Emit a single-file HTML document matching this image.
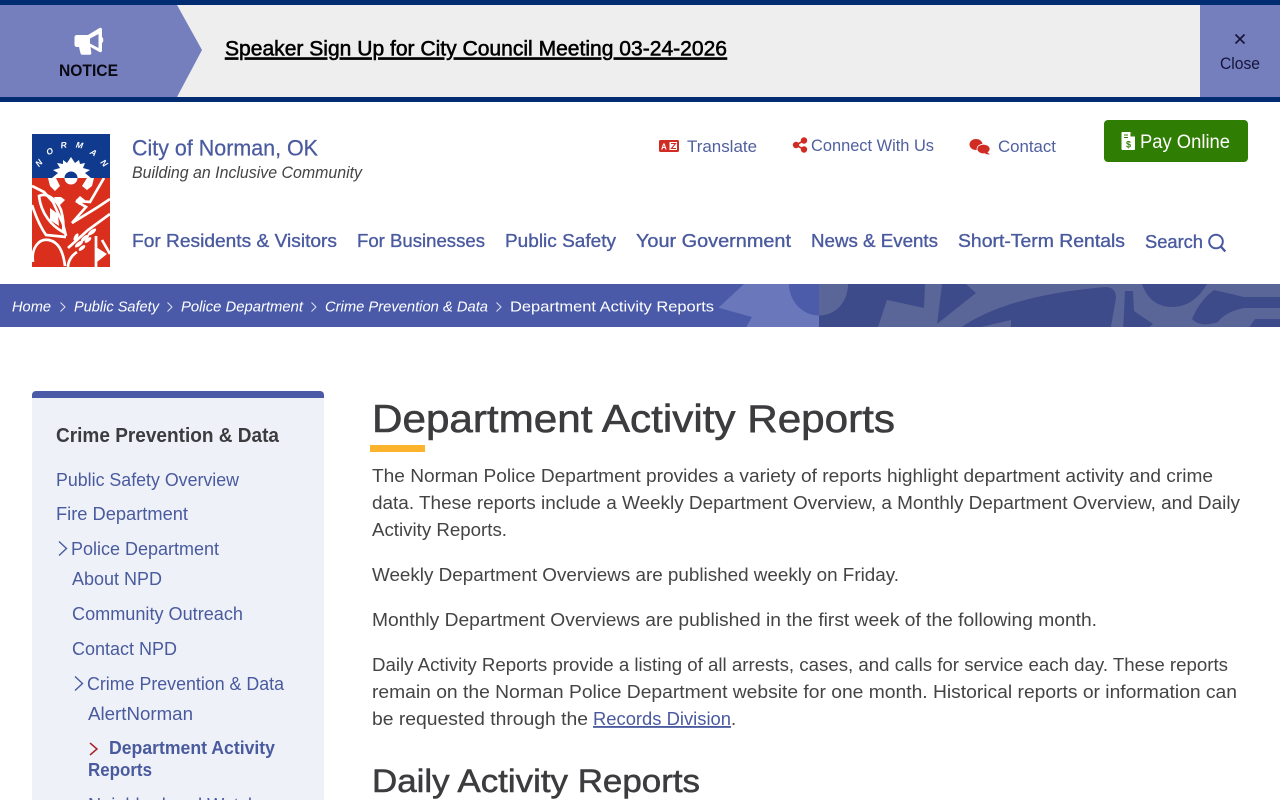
<!DOCTYPE html>
<html lang="en">
<head>
<meta charset="utf-8">
<title>Department Activity Reports</title>
<style>
html,body{margin:0;padding:0;background:#fff}
body{width:1280px;height:800px;overflow:hidden;position:relative}
.b{position:absolute}
svg{position:absolute;left:0;top:0;display:block}
text{font-family:"Liberation Sans",Arial,sans-serif;white-space:pre}
.n{font-size:18.5px;fill:#4a5a9e;stroke:#4a5a9e;stroke-width:.35px}
.p{font-size:18.4px;fill:#444}
.s{font-size:18.4px;fill:#4a5a9e}
.c{font-size:15.2px;fill:#fff;font-style:italic}
.t{font-size:16.4px;fill:#4f5f9f}
</style>
</head>
<body>
<div class="b" style="left:0;top:0;width:1280px;height:102px;background:#002d72"></div>
<div class="b" style="left:0;top:5px;width:1280px;height:92px;background:#eee"></div>
<div class="b" style="left:1200px;top:5px;width:80px;height:92px;background:#767fbd"></div>
<div class="b" style="left:1104px;top:120px;width:144px;height:42px;background:#2f7d02;border-radius:4px"></div>
<div class="b" style="left:0;top:284px;width:1280px;height:43px;background:#4a5aa8"></div>
<div class="b" style="left:32px;top:391px;width:292px;height:409px;background:#eef2f8;border-radius:4px 4px 0 0"></div>
<div class="b" style="left:32px;top:391px;width:292px;height:7px;background:#4c59a6;border-radius:4px 4px 0 0"></div>
<div class="b" style="left:370px;top:445px;width:55px;height:7px;background:#fdb42c"></div>

<svg width="1280" height="800" viewBox="0 0 1280 800" xmlns="http://www.w3.org/2000/svg">
<defs><clipPath id="bar"><rect x="0" y="284" width="1280" height="43"/></clipPath>
<clipPath id="lt"><rect x="32" y="134" width="78" height="44"/></clipPath>
<clipPath id="lb"><rect x="32" y="178" width="78" height="89"/></clipPath></defs>

<!-- notice -->
<polygon points="0,5 177,5 202,50 177,97 0,97" fill="#767fbd"/>
<path d="M77 35h11l11.500-7c1.300-.7 2.500.1 2.500 1.500V37c.8.5 1.300 1.500 1.300 3s-.5 2.500-1.300 3v7.500c0 1.400-1.200 2.200-2.500 1.500l-9-5 .8 6c.2 1-.5 1.800-1.500 1.800h-7.500c-1 0-1.600-.6-1.800-1.500L79 47h-2c-1.500 0-2.500-1-2.500-2.500v-7c0-1.500 1-2.500 2.500-2.500z M90 38.500v5l8.500 4.500V34z" fill="#fff" fill-rule="evenodd"/>
<text x="59" y="76" font-size="16.500" font-weight="700" fill="#0a0a14" textLength="59" lengthAdjust="spacingAndGlyphs">NOTICE</text>
<a href="#"><text x="225" y="55.500" font-size="21" fill="#000" stroke="#000" stroke-width=".55" text-decoration="underline" textLength="502" lengthAdjust="spacingAndGlyphs">Speaker Sign Up for City Council Meeting 03-24-2026</text></a>
<path d="M1235.500 34.500l9 9m0-9l-9 9" stroke="#14143a" stroke-width="1.600" fill="none"/>
<text x="1220" y="69" font-size="16.400" fill="#14143a" textLength="40" lengthAdjust="spacingAndGlyphs">Close</text>

<!-- logo -->
<rect x="32" y="134" width="78" height="44" fill="#0f3a8e"/>
<rect x="32" y="178" width="78" height="89" fill="#d92f1c"/>
<g fill="#fff" font-size="8.500" font-style="italic" font-weight="700" text-anchor="middle">
<text x="41" y="165" transform="rotate(-48 41 165)">N</text>
<text x="51" y="154" transform="rotate(-28 51 154)">O</text>
<text x="64" y="148" transform="rotate(-8 64 148)">R</text>
<text x="79" y="148" transform="rotate(10 79 148)">M</text>
<text x="92" y="155" transform="rotate(30 92 155)">A</text>
<text x="102" y="165" transform="rotate(48 102 165)">N</text>
</g>
<g clip-path="url(#lt)">
<polygon fill="#fff" points="52,178 58,173 53,170 60,168 57,163 63,164 63,160 67,163 71,157 75,163 79,160 80,164 85,163 83,168 90,170 85,173 91,178"/>
<circle cx="71" cy="178" r="6.500" fill="#0f3a8e"/>
</g>
<g clip-path="url(#lb)">
<circle cx="71" cy="178" r="6.500" fill="#fff"/>
<g fill="#fff">
<polygon points="48,178 56,178 60,186 55,191 50,186"/>
<polygon points="94,178 87,178 82,186 87,190 92,186"/>
<polygon points="61,197 65,200 59,206 54,197"/>
<polygon points="76,200 80,196 85,200 79,205"/>
</g>
<g fill="none" stroke="#fff" stroke-width="2.700">
<path d="M32 186l12 6 9 10 10 22 3 12"/>
<path d="M39 196c8-4 18 4 22 14 2 7 3 15 2 22-11-6-22-18-24-36z"/>
<path d="M32 205c3 9 7 20 14 30l20 2"/>
<path d="M104 178l-14 24-14-1 10 6-14 16 26-16 12-8"/>
<path d="M110 214l-22 16-20 18"/>
<path d="M33 262c-2-14 6-24 16-22 9 2 14 10 16 26"/>
<path d="M96 236v31M102 240l8 14"/>
<path d="M68 267c0-6 4-12 9-15"/>
</g>
<polygon points="50,208 58,214 59,226 50,220" fill="#fff"/>
<polygon points="96,247 107,254 97,262" fill="#fff"/>
<g fill="#fff"><ellipse cx="92" cy="232" rx="5" ry="2" transform="rotate(-38 92 232)"/><ellipse cx="85" cy="238" rx="5" ry="2" transform="rotate(-38 85 238)"/><ellipse cx="79" cy="244" rx="5" ry="2" transform="rotate(-38 79 244)"/><ellipse cx="88" cy="240" rx="4" ry="1.800" transform="rotate(-38 88 240)"/><ellipse cx="82" cy="248" rx="4" ry="1.800" transform="rotate(-38 82 248)"/><ellipse cx="76" cy="237" rx="4" ry="1.800" transform="rotate(-60 76 237)"/></g>
</g>

<!-- site title -->
<a href="#"><text x="132" y="155.500" font-size="22.500" fill="#4a5a9e" stroke="#4a5a9e" stroke-width=".25" textLength="186" lengthAdjust="spacingAndGlyphs">City of Norman, OK</text></a>
<text x="132" y="178" font-size="16.300" font-style="italic" fill="#444" textLength="230" lengthAdjust="spacingAndGlyphs">Building an Inclusive Community</text>

<!-- utility links -->
<rect x="659" y="140" width="20" height="12" rx="1.500" fill="#d02c24"/>
<rect x="669.500" y="142" width="7.500" height="8" fill="#fff"/>
<text x="661" y="149.500" font-size="8" font-weight="700" fill="#fff">A</text>
<path d="M671 143.500h4.500l-4 5h4.500" stroke="#d02c24" stroke-width="1.100" fill="none"/>
<a href="#"><text class="t" x="687" y="152" textLength="70" lengthAdjust="spacingAndGlyphs">Translate</text></a>
<g fill="#d02c24"><circle cx="796" cy="145" r="3.200"/><circle cx="804" cy="140.500" r="3.200"/><circle cx="804" cy="149.500" r="3.200"/></g>
<path d="M796 145l8-4.500M796 145l8 4.500" stroke="#d02c24" stroke-width="1.600"/>
<a href="#"><text class="t" x="811" y="151" textLength="123" lengthAdjust="spacingAndGlyphs">Connect With Us</text></a>
<g fill="#d02c24"><ellipse cx="976" cy="144.500" rx="6.500" ry="5.500"/><ellipse cx="983.500" cy="149" rx="6.500" ry="4.800" stroke="#fff" stroke-width=".8"/><path d="M987 152l3 2.500-5-.5z"/></g>
<a href="#"><text class="t" x="998" y="152" textLength="58" lengthAdjust="spacingAndGlyphs">Contact</text></a>
<path d="M1122.500 132h8l4.500 4.500v12.500c0 .6-.4 1-1 1h-11.500c-.6 0-1-.4-1-1v-16c0-.6.400-1 1-1z" fill="#fff"/>
<path d="M1130.500 132v4.500h4.500z" fill="#2f7d02"/>
<path d="M1124 135h4M1124 137.500h4" stroke="#2f7d02" stroke-width="1"/>
<text x="1128.500" y="147.300" font-size="9" font-weight="700" fill="#2f7d02" text-anchor="middle">$</text>
<a href="#"><text x="1140" y="148" font-size="19" fill="#fff" textLength="90" lengthAdjust="spacingAndGlyphs">Pay Online</text></a>

<!-- nav -->
<a href="#"><text class="n" x="132" y="247" textLength="205" lengthAdjust="spacingAndGlyphs">For Residents &amp; Visitors</text></a>
<a href="#"><text class="n" x="357" y="247" textLength="128" lengthAdjust="spacingAndGlyphs">For Businesses</text></a>
<a href="#"><text class="n" x="505" y="247" textLength="111" lengthAdjust="spacingAndGlyphs">Public Safety</text></a>
<a href="#"><text class="n" x="636" y="247" textLength="155" lengthAdjust="spacingAndGlyphs">Your Government</text></a>
<a href="#"><text class="n" x="811" y="247" textLength="127" lengthAdjust="spacingAndGlyphs">News &amp; Events</text></a>
<a href="#"><text class="n" x="958" y="247" textLength="167" lengthAdjust="spacingAndGlyphs">Short-Term Rentals</text></a>
<a href="#"><text class="n" x="1145" y="248" textLength="58" lengthAdjust="spacingAndGlyphs">Search</text></a>
<circle cx="1216" cy="241.500" r="6.800" fill="none" stroke="#4a5a9e" stroke-width="2"/>
<path d="M1220.800 246.500l4.500 5" stroke="#4a5a9e" stroke-width="2.400"/>

<!-- breadcrumb band -->
<g clip-path="url(#bar)">
<polygon points="744,284 718.500,307.700 752,317 744,331 819,331 819,284" fill="#6a78bb"/>
<ellipse cx="819" cy="284" rx="30" ry="31.500" fill="#4c5cab"/>
<rect x="819" y="284" width="461" height="43" fill="#3e4b8b"/>
<path d="M819 284v31.500c17 0 29-14 29-31.500z" fill="#5b6698"/>
<path d="M878 327l9-27 37 8 1-24h355v43z" fill="#5b6698"/>
<g fill="#3e4b8b">
<polygon points="942,284 966,284 976,293 937,324"/>
<path d="M955 332Q1000 296 1105 287Q1116 287 1116 298L1110 332z"/>
<path d="M1123 332l2-41h8l1 20 19 13-9 8z"/>
<path d="M1142 284Q1150 308 1175 307Q1195 305 1207 284z"/>
<path d="M1192 319Q1200 300 1214 290L1244 297H1280V308H1244Q1225 312 1218 322Q1200 328 1192 319z"/>
<path d="M1246 332l9-13h25v13z"/>
</g>
<polygon points="1011,320 1011,327 981,327" fill="#5b6698"/>
</g>

<!-- breadcrumb text -->
<a href="#"><text class="c" x="12" y="311.500" textLength="39" lengthAdjust="spacingAndGlyphs">Home</text></a>
<path d="M60.500 302.500l4.500 4.500-4.500 4.500" fill="none" stroke="#dfe3f5" stroke-width="1"/>
<a href="#"><text class="c" x="74" y="311.500" textLength="85" lengthAdjust="spacingAndGlyphs">Public Safety</text></a>
<path d="M167.500 302.500l4.500 4.500-4.500 4.500" fill="none" stroke="#dfe3f5" stroke-width="1"/>
<a href="#"><text class="c" x="181" y="311.500" textLength="122" lengthAdjust="spacingAndGlyphs">Police Department</text></a>
<path d="M311.500 302.500l4.500 4.500-4.500 4.500" fill="none" stroke="#dfe3f5" stroke-width="1"/>
<a href="#"><text class="c" x="325" y="311.500" textLength="163" lengthAdjust="spacingAndGlyphs">Crime Prevention &amp; Data</text></a>
<path d="M496.500 302.500l4.500 4.500-4.500 4.500" fill="none" stroke="#dfe3f5" stroke-width="1"/>
<text x="510" y="311.500" font-size="15.200" fill="#fff" textLength="204" lengthAdjust="spacingAndGlyphs">Department Activity Reports</text>

<!-- sidebar -->
<text x="56" y="442" font-size="20" font-weight="700" fill="#3c3c40" textLength="223" lengthAdjust="spacingAndGlyphs">Crime Prevention &amp; Data</text>
<a href="#"><text class="s" x="56" y="486" textLength="183" lengthAdjust="spacingAndGlyphs">Public Safety Overview</text></a>
<a href="#"><text class="s" x="56" y="520" textLength="132" lengthAdjust="spacingAndGlyphs">Fire Department</text></a>
<path d="M59 541.500l7.500 7-7.500 7" fill="none" stroke="#4a5a9e" stroke-width="1.400"/>
<a href="#"><text class="s" x="71" y="555" textLength="148" lengthAdjust="spacingAndGlyphs">Police Department</text></a>
<a href="#"><text class="s" x="72" y="585" textLength="90" lengthAdjust="spacingAndGlyphs">About NPD</text></a>
<a href="#"><text class="s" x="72" y="620" textLength="171" lengthAdjust="spacingAndGlyphs">Community Outreach</text></a>
<a href="#"><text class="s" x="72" y="655" textLength="105" lengthAdjust="spacingAndGlyphs">Contact NPD</text></a>
<path d="M75 676.500l7.500 7-7.500 7" fill="none" stroke="#4a5a9e" stroke-width="1.400"/>
<a href="#"><text class="s" x="87" y="690" textLength="197" lengthAdjust="spacingAndGlyphs">Crime Prevention &amp; Data</text></a>
<a href="#"><text class="s" x="88" y="720" textLength="105" lengthAdjust="spacingAndGlyphs">AlertNorman</text></a>
<path d="M90 743l7 6-7 6" fill="none" stroke="#a8242c" stroke-width="1.500"/>
<a href="#"><text x="109" y="754" font-size="18.400" font-weight="700" fill="#4a5a9e" textLength="166" lengthAdjust="spacingAndGlyphs">Department Activity</text></a>
<a href="#"><text x="88" y="776" font-size="18.400" font-weight="700" fill="#4a5a9e" textLength="64" lengthAdjust="spacingAndGlyphs">Reports</text></a>
<a href="#"><text class="s" x="88" y="811" textLength="170" lengthAdjust="spacingAndGlyphs">Neighborhood Watch</text></a>

<!-- main -->
<text x="372" y="432" font-size="38.500" fill="#3c3c3f" stroke="#3c3c3f" stroke-width=".6" textLength="523" lengthAdjust="spacingAndGlyphs">Department Activity Reports</text>
<text class="p" x="372" y="482" textLength="841" lengthAdjust="spacingAndGlyphs">The Norman Police Department provides a variety of reports highlight department activity and crime</text>
<text class="p" x="372" y="509" textLength="868" lengthAdjust="spacingAndGlyphs">data. These reports include a Weekly Department Overview, a Monthly Department Overview, and Daily</text>
<text class="p" x="372" y="536" textLength="135" lengthAdjust="spacingAndGlyphs">Activity Reports.</text>
<text class="p" x="372" y="581" textLength="527" lengthAdjust="spacingAndGlyphs">Weekly Department Overviews are published weekly on Friday.</text>
<text class="p" x="372" y="626" textLength="725" lengthAdjust="spacingAndGlyphs">Monthly Department Overviews are published in the first week of the following month.</text>
<text class="p" x="372" y="671" textLength="856" lengthAdjust="spacingAndGlyphs">Daily Activity Reports provide a listing of all arrests, cases, and calls for service each day. These reports</text>
<text class="p" x="372" y="698" textLength="865" lengthAdjust="spacingAndGlyphs">remain on the Norman Police Department website for one month. Historical reports or information can</text>
<text class="p" x="372" y="725" textLength="216" lengthAdjust="spacingAndGlyphs">be requested through the</text>
<a href="#"><text x="593" y="725" font-size="18.400" fill="#4a5a9e" text-decoration="underline" textLength="138" lengthAdjust="spacingAndGlyphs">Records Division</text></a>
<text class="p" x="731" y="725">.</text>
<text x="372" y="792" font-size="32.500" fill="#3c3c3f" stroke="#3c3c3f" stroke-width=".55" textLength="328" lengthAdjust="spacingAndGlyphs">Daily Activity Reports</text>
</svg>
</body>
</html>
